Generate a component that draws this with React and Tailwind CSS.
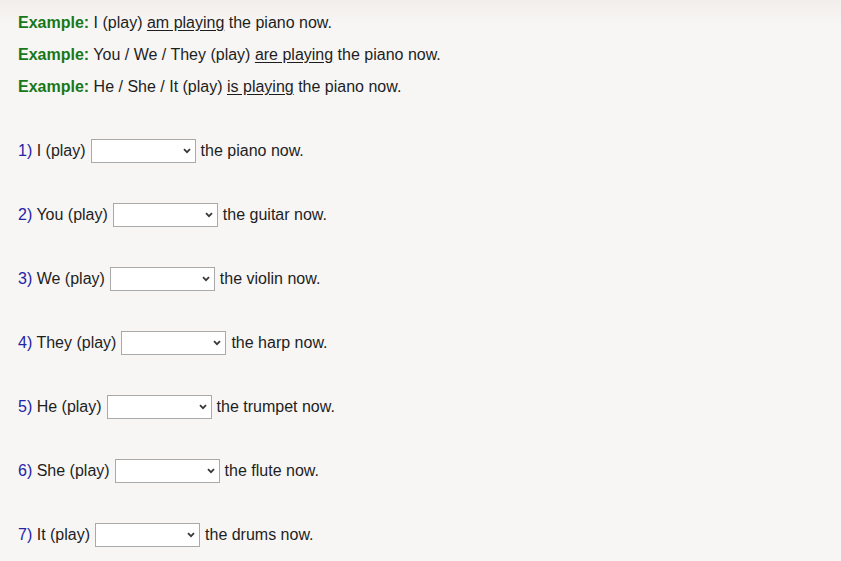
const examples = [
  { subject: "I (play)", answer: "am playing" },
  { subject: "You / We / They (play)", answer: "are playing" },
  { subject: "He / She / It (play)", answer: "is playing" },
];

const questions = [
  { subject: "I (play)", rest: "the piano now." },
  { subject: "You (play)", rest: "the guitar now." },
  { subject: "We (play)", rest: "the violin now." },
  { subject: "They (play)", rest: "the harp now." },
  { subject: "He (play)", rest: "the trumpet now." },
  { subject: "She (play)", rest: "the flute now." },
  { subject: "It (play)", rest: "the drums now." },
];

function Dropdown() {
  return (
    <span className="relative inline-flex h-[24px] w-[105px] items-center justify-end border border-[#a9a9a9] bg-white pr-[4px]">
      <svg width="8" height="6" viewBox="0 0 8 6" className="text-[#3a3a3a]">
        <path d="M1 1.2 L4 4.2 L7 1.2" fill="none" stroke="currentColor" strokeWidth="1.8" />
      </svg>
    </span>
  );
}

export default function App() {
  return (
    <div
      className="h-[561px] overflow-hidden bg-gradient-to-b from-[#f2eeea] to-[#f7f6f5] to-[24px] pl-[18px] pt-[12px] text-[16px] text-[#1e1e1e]"
      style={{ fontFamily: '"Liberation Sans", Arial, sans-serif' }}
    >
      {examples.map((ex, i) => (
        <div key={i} className="flex h-[22px] items-center mb-[10px] whitespace-pre">
          <span className="font-bold text-[#187818]">Example:</span>
          <span> {ex.subject} </span>
          <span className="underline underline-offset-[2px]">{ex.answer}</span>
          <span> the piano now.</span>
        </div>
      ))}

      <div className="mt-[41px]">
        {questions.map((q, i) => (
          <div key={i} className="flex h-[24px] items-center gap-[5px] mb-[40px] last:mb-0 whitespace-pre">
            <span>
              <span className="text-[#2323a8]">{i + 1})</span> {q.subject}
            </span>
            <Dropdown />
            <span>{q.rest}</span>
          </div>
        ))}
      </div>
    </div>
  );
}
